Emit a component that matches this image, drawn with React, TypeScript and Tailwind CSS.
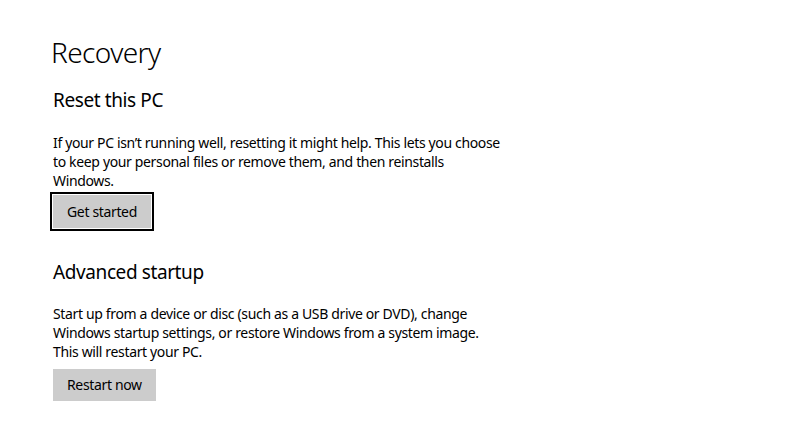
export default function App() {
  return (
    <main
      className="min-h-screen w-[800px] h-[447px] bg-white text-black"
      style={{ fontFamily: '"Noto Sans", "Open Sans", sans-serif' }}
    >
      <div className="flex flex-col pl-[53px] pt-[33px]">
        <h1 className="-ml-[2px] text-[28px] font-light leading-[38px] tracking-[-0.6px]">Recovery</h1>
        <section className="mt-[15px] flex flex-col">
          <h2 className="text-[19px] leading-[28px] tracking-[-0.4px]">Reset this PC</h2>
          <p className="mt-[19px] w-[450px] text-[14px] leading-[19px] tracking-[-0.35px]">
            If your PC isn’t running well, resetting it might help. This lets you choose to keep your personal files or
            remove them, and then reinstalls Windows.
          </p>
          <div className="mt-[2px] -ml-[3px]">
            <button className="border-2 border-black p-px">
              <span className="block bg-[#cccccc] px-[14px] py-[6px] text-[14px] leading-[21px] tracking-[-0.35px]">
                Get started
              </span>
            </button>
          </div>
        </section>
        <section className="mt-[27px] flex flex-col">
          <h2 className="text-[19px] leading-[28px] tracking-[-0.4px]">Advanced startup</h2>
          <p className="mt-[18px] w-[450px] text-[14px] leading-[19px] tracking-[-0.35px]">
            Start up from a device or disc (such as a USB drive or DVD), change Windows startup settings, or restore
            Windows from a system image. This will restart your PC.
          </p>
          <div className="mt-[8px]">
            <button className="bg-[#cccccc] px-[14px] py-[6px] text-[14px] leading-[20px] tracking-[-0.35px]">
              Restart now
            </button>
          </div>
        </section>
      </div>
    </main>
  );
}
